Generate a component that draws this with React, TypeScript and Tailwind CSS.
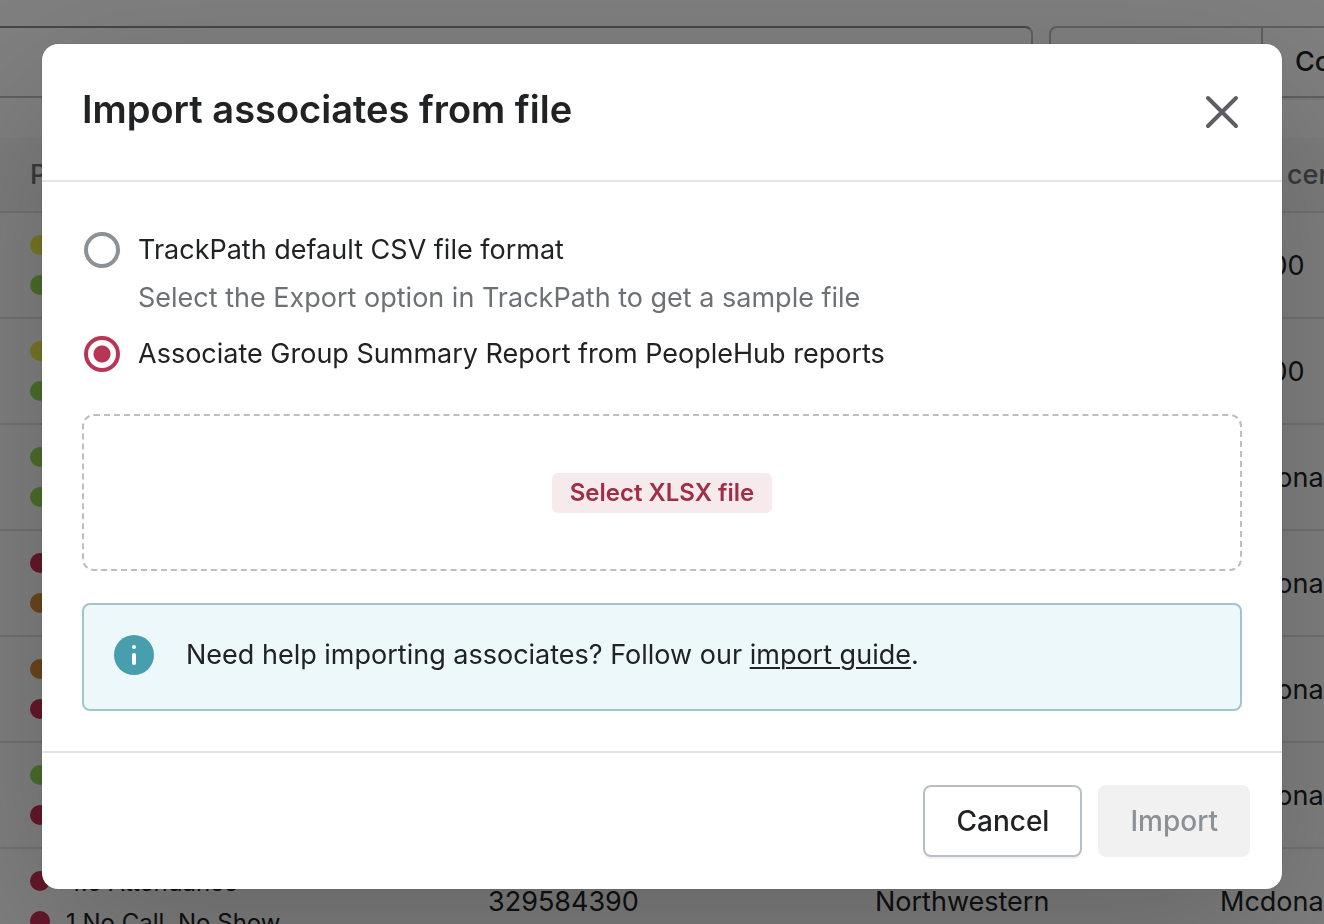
import { useState } from "react";

type Tone = "yellow" | "green" | "red" | "orange";

interface Point {
  tone: Tone;
  label?: string;
}

interface AssociateRow {
  points: Point[];
  associateId?: string;
  location?: string;
  costCenter: string;
}

const toneClasses: Record<Tone, string> = {
  yellow: "bg-[#efe84c]",
  green: "bg-[#96da55]",
  red: "bg-[#ca3050]",
  orange: "bg-[#d88c38]",
};

const rows: AssociateRow[] = [
  { points: [{ tone: "yellow" }, { tone: "green" }], costCenter: "20000" },
  { points: [{ tone: "yellow" }, { tone: "green" }], costCenter: "20000" },
  { points: [{ tone: "green" }, { tone: "green" }], costCenter: "Mcdonald" },
  { points: [{ tone: "red" }, { tone: "orange" }], costCenter: "Mcdonald" },
  { points: [{ tone: "orange" }, { tone: "red" }], costCenter: "Mcdonald" },
  { points: [{ tone: "green" }, { tone: "red" }], costCenter: "Mcdonald" },
  {
    points: [
      { tone: "red", label: "4.5 Attendance" },
      { tone: "red", label: "1 No Call, No Show" },
    ],
    associateId: "329584390",
    location: "Northwestern",
    costCenter: "Mcdonald",
  },
];

function AssociatesPage() {
  return (
    <div className="h-full overflow-hidden bg-white pt-[26px]" aria-hidden="true">
      {/* Search and filters */}
      <div className="flex gap-4">
        <input
          type="text"
          aria-label="Search associates"
          className="h-[72px] min-w-0 flex-1 rounded-r-lg border-2 border-l-0 border-[#babfc3] border-t-[#898f94]"
        />
        <div className="flex h-[72px] w-[275px] shrink-0 overflow-hidden rounded-l-lg border-2 border-r-0 border-[#babfc3] shadow-[0_2px_0_rgba(0,0,0,0.05)]">
          <button className="w-[212px] shrink-0 border-r-2 border-[#babfc3] font-medium">
            Status
          </button>
          <button className="shrink-0 px-8 font-medium">Cost center</button>
        </div>
      </div>

      {/* Associates table */}
      <table className="mt-10 w-full min-w-[1500px] table-fixed border-collapse text-left">
        <thead>
          <tr className="h-[74px] border-b-2 border-[#e1e3e5] bg-[#f8f8f8] text-[#6d7175]">
            <th className="w-[458px] pl-[30px] font-medium">Points</th>
            <th className="w-[387px] pl-[30px] font-medium">Associate ID</th>
            <th className="w-[345px] pl-[30px] font-medium">Location</th>
            <th className="pl-[30px] font-medium">Cost center</th>
          </tr>
        </thead>
        <tbody>
          {rows.map((row, index) => (
            <tr key={index} className="h-[106px] border-b-2 border-[#e1e3e5]">
              <td className="pl-[30px]">
                {row.points.map((point, i) => (
                  <div key={i} className="flex h-10 items-center gap-4 text-2xl">
                    <span
                      className={`size-5 rounded-full ${toneClasses[point.tone]}`}
                    />
                    <span className="pt-1">{point.label}</span>
                  </div>
                ))}
              </td>
              <td className="pt-0.5 pl-[30px]">{row.associateId}</td>
              <td className="pt-0.5 pl-[30px]">{row.location}</td>
              <td className="pt-0.5 pl-[30px]">{row.costCenter}</td>
            </tr>
          ))}
        </tbody>
      </table>
    </div>
  );
}

interface FormatOptionProps {
  id: string;
  label: string;
  helpText?: string;
  checked: boolean;
  onChange: () => void;
}

function FormatOption({
  id,
  label,
  helpText,
  checked,
  onChange,
}: FormatOptionProps) {
  return (
    <div className="py-2">
      <label htmlFor={id} className="flex items-center gap-4">
        <span className="flex size-10 shrink-0 items-center justify-center">
          <input
            id={id}
            type="radio"
            name="format"
            checked={checked}
            onChange={onChange}
            className="size-9 appearance-none rounded-full border-4 border-[#8c9196] bg-white checked:border-[#b83555] checked:bg-[radial-gradient(circle,#b83555_8px,#fff_9px)]"
          />
        </span>
        {label}
      </label>
      {helpText && <p className="mt-2 pl-14 text-[#6d7175]">{helpText}</p>}
    </div>
  );
}

function ImportDialog() {
  const [format, setFormat] = useState("peoplehub");

  return (
    <div
      role="dialog"
      aria-labelledby="import-title"
      className="w-full max-w-[1240px] rounded-2xl bg-white shadow-[0_52px_160px_rgba(0,0,0,0.2),0_0_2px_rgba(0,0,0,0.2)]"
    >
      <div className="flex items-start justify-between border-b-2 border-[#e1e3e5] p-10">
        <h2 id="import-title" className="text-[38px] leading-[50px] font-semibold">
          Import associates from file
        </h2>
        <button aria-label="Close" className="py-2 text-[#5c5f62]">
          <svg viewBox="0 0 40 40" className="size-10" fill="none">
            <path
              d="M6 6l28 28M34 6L6 34"
              stroke="currentColor"
              strokeWidth="4"
              strokeLinecap="round"
            />
          </svg>
        </button>
      </div>

      <div className="p-10">
        <FormatOption
          id="format-csv"
          label="TrackPath default CSV file format"
          helpText="Select the Export option in TrackPath to get a sample file"
          checked={format === "csv"}
          onChange={() => setFormat("csv")}
        />
        <FormatOption
          id="format-peoplehub"
          label="Associate Group Summary Report from PeopleHub reports"
          checked={format === "peoplehub"}
          onChange={() => setFormat("peoplehub")}
        />

        {/* Drop zone */}
        <div className="mt-8 flex justify-center rounded-xl border-2 border-dashed border-[#babfc3] pt-[57px] pb-14">
          <button className="h-10 rounded-md bg-[#f7eaed] px-[18px] text-2xl font-semibold text-[#9f2e47]">
            Select {format === "csv" ? "CSV" : "XLSX"} file
          </button>
        </div>

        {/* Help banner */}
        <div className="mt-8 flex items-center gap-8 rounded-lg border-2 border-[#a0c5cc] bg-[#edf8fa] px-[30px] pt-[30px] pb-[34px]">
          <svg viewBox="0 0 40 40" className="size-10 shrink-0">
            <circle cx="20" cy="20" r="20" fill="#479ead" />
            <circle cx="20" cy="12" r="2" fill="#fff" />
            <rect x="18" y="18" width="4" height="12" rx="2" fill="#fff" />
          </svg>
          <p>
            Need help importing associates? Follow our{" "}
            <a href="#" className="underline decoration-2 underline-offset-3">
              import guide
            </a>
            .
          </p>
        </div>
      </div>

      <div className="flex justify-end gap-4 border-t-2 border-[#e1e3e5] p-8 text-[28px]">
        <button className="h-[72px] rounded-lg border-2 border-[#babfc3] px-[31px] font-medium shadow-[0_2px_0_rgba(0,0,0,0.05)]">
          Cancel
        </button>
        <button
          disabled
          className="h-[72px] rounded-lg bg-[#f1f1f1] px-8 font-medium text-[#8c9196]"
        >
          Import
        </button>
      </div>
    </div>
  );
}

export default function App() {
  return (
    <div className="h-screen font-['Inter',sans-serif] text-[27px] leading-10 text-[#202223]">
      <AssociatesPage />
      <div className="fixed inset-0 flex items-start justify-center overflow-hidden bg-black/50 px-[42px] pt-11">
        <ImportDialog />
      </div>
    </div>
  );
}
